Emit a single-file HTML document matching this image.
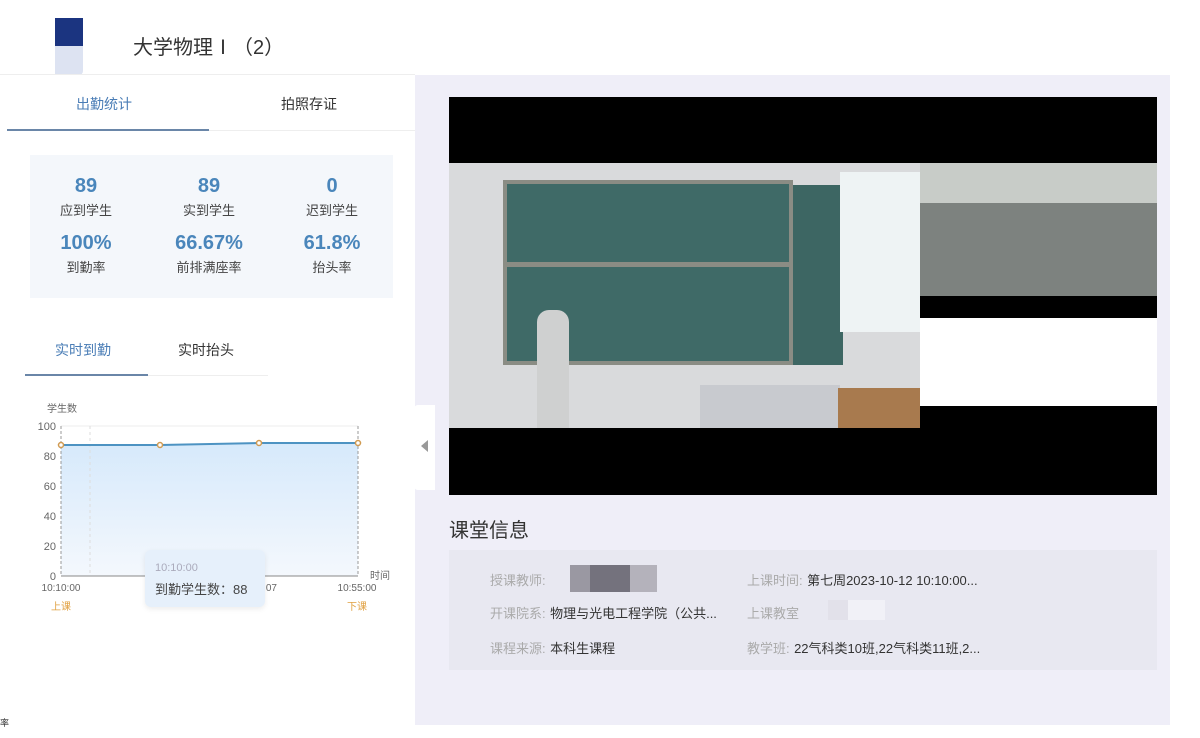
<!DOCTYPE html>
<html><head><meta charset="utf-8"><style>
*{margin:0;padding:0;box-sizing:border-box}
body{width:1200px;height:738px;background:#fff;position:relative;overflow:hidden;font-family:"Liberation Sans","Noto Sans CJK SC",sans-serif;color:#333}
.a{position:absolute}
.stat{position:absolute;width:120px;text-align:center}
.num{font-size:20px;font-weight:bold;color:#4a86bb}
.lb{font-size:13px;color:#444;margin-top:2px}
.lab{color:#aaa;font-size:13px}
.val{color:#333;font-size:13px}
</style></head><body>
<div class="a" style="left:55px;top:18px;width:28px;height:28px;background:#1b3480"></div>
<div class="a" style="left:55px;top:46px;width:28px;height:29px;background:#dde3f2;border-radius:0 0 4px 0"></div>
<div class="a" style="left:133px;top:31px;font-size:20px;color:#333">大学物理Ⅰ（2）</div>
<div class="a" style="left:0;top:74px;width:415px;height:1px;background:#eee"></div>
<div class="a" style="left:76px;top:94px;font-size:14px;color:#4a7db6">出勤统计</div>
<div class="a" style="left:281px;top:94px;font-size:14px;color:#333">拍照存证</div>
<div class="a" style="left:7px;top:130px;width:408px;height:1px;background:#eee"></div>
<div class="a" style="left:7px;top:129px;width:202px;height:2px;background:#6a86a8"></div>
<div class="a" style="left:30px;top:155px;width:363px;height:143px;background:#f4f7fb"></div>
<div class="stat" style="left:26px;top:175px"><div class="num">89</div><div class="lb">应到学生</div></div>
<div class="stat" style="left:149px;top:175px"><div class="num">89</div><div class="lb">实到学生</div></div>
<div class="stat" style="left:272px;top:175px"><div class="num">0</div><div class="lb">迟到学生</div></div>
<div class="stat" style="left:26px;top:232px"><div class="num">100%</div><div class="lb">到勤率</div></div>
<div class="stat" style="left:149px;top:232px"><div class="num">66.67%</div><div class="lb">前排满座率</div></div>
<div class="stat" style="left:272px;top:232px"><div class="num">61.8%</div><div class="lb">抬头率</div></div>
<div class="a" style="left:55px;top:340px;font-size:14px;color:#4a7db6">实时到勤</div>
<div class="a" style="left:178px;top:340px;font-size:14px;color:#333">实时抬头</div>
<div class="a" style="left:25px;top:375px;width:243px;height:1px;background:#eee"></div>
<div class="a" style="left:25px;top:374px;width:123px;height:2px;background:#6a86a8"></div>
<svg class="a" style="left:0;top:395px" width="415" height="230">
<defs><linearGradient id="g" x1="0" y1="0" x2="0" y2="1"><stop offset="0" stop-color="#d6e9fb"/><stop offset="1" stop-color="#f4f8fd"/></linearGradient></defs>
<text x="47" y="17" font-size="10" fill="#666">学生数</text>
<g font-size="11" fill="#666" text-anchor="end">
<text x="56" y="35">100</text><text x="56" y="65">80</text><text x="56" y="95">60</text><text x="56" y="125">40</text><text x="56" y="155">20</text><text x="56" y="185">0</text></g>
<g stroke="#eee"><line x1="61" y1="31" x2="358" y2="31"/><line x1="61" y1="61" x2="358" y2="61"/><line x1="61" y1="91" x2="358" y2="91"/><line x1="61" y1="121" x2="358" y2="121"/><line x1="61" y1="151" x2="358" y2="151"/></g>
<path d="M61 50 L160 50 L259 48 L358 48 L358 181 L61 181Z" fill="url(#g)"/>
<line x1="90" y1="31" x2="90" y2="181" stroke="#ddd" stroke-dasharray="3,3"/>
<line x1="61" y1="31" x2="61" y2="181" stroke="#999" stroke-dasharray="3,2"/>
<line x1="358" y1="31" x2="358" y2="181" stroke="#999" stroke-dasharray="3,2"/>
<line x1="61" y1="181" x2="358" y2="181" stroke="#888"/>
<path d="M61 50 L160 50 L259 48 L358 48" stroke="#4d93c2" stroke-width="2" fill="none"/>
<g fill="#fff" stroke="#d09a50" stroke-width="1.5"><circle cx="61" cy="50" r="2.5"/><circle cx="160" cy="50" r="2.5"/><circle cx="259" cy="48" r="2.5"/><circle cx="358" cy="48" r="2.5"/></g>
<text x="370" y="184" font-size="10" fill="#666">时间</text>
<g font-size="10" fill="#666" text-anchor="middle"><text x="61" y="196">10:10:00</text><text x="357" y="196">10:55:00</text><text x="270" y="196">:07</text></g>
<text x="61" y="215" font-size="10" fill="#e0a040" text-anchor="middle">上课</text>
<text x="357" y="215" font-size="10" fill="#e0a040" text-anchor="middle">下课</text>
</svg>
<div class="a" style="left:145px;top:550px;width:120px;height:57px;background:#e6f0fb;border-radius:6px;box-shadow:0 2px 6px rgba(0,0,0,.08)"></div>
<div class="a" style="left:155px;top:562px;font-size:11px;color:#aab">10:10:00</div>
<div class="a" style="left:155px;top:579px;font-size:13px;color:#444">到勤学生数：88</div>
<div class="a" style="left:0;top:716px;font-size:9px;color:#333">率</div>
<div class="a" style="left:415px;top:75px;width:755px;height:650px;background:#efeef8"></div>
<div class="a" style="left:414px;top:405px;width:21px;height:85px;background:#fff;border-radius:4px 0 0 4px"></div>
<div class="a" style="left:421px;top:440px;width:0;height:0;border-top:6px solid transparent;border-bottom:6px solid transparent;border-right:7px solid #999"></div>
<div class="a" style="left:449px;top:97px;width:708px;height:398px;background:#000"></div>
<div class="a" style="left:449px;top:163px;width:471px;height:265px;background:#d9dadc"></div>
<div class="a" style="left:503px;top:180px;width:290px;height:185px;background:#3f6a67;border:4px solid #8a8c84"></div>
<div class="a" style="left:503px;top:262px;width:290px;height:5px;background:#8a8c84"></div>
<div class="a" style="left:793px;top:185px;width:50px;height:180px;background:#3d6663"></div>
<div class="a" style="left:840px;top:172px;width:80px;height:160px;background:#eef3f4"></div>
<div class="a" style="left:700px;top:385px;width:140px;height:43px;background:#c8cacf"></div>
<div class="a" style="left:838px;top:388px;width:82px;height:40px;background:#a87a4e"></div>
<div class="a" style="left:537px;top:310px;width:32px;height:118px;background:#cfd0d0;border-radius:12px 12px 0 0"></div>
<div class="a" style="left:920px;top:163px;width:237px;height:133px;background:#7d827f"></div>
<div class="a" style="left:920px;top:163px;width:237px;height:40px;background:#c8ccc8"></div>
<div class="a" style="left:920px;top:318px;width:237px;height:88px;background:#fff"></div>
<div class="a" style="left:449px;top:514px;font-size:20px;color:#333">课堂信息</div>
<div class="a" style="left:449px;top:550px;width:708px;height:120px;background:#e8e8f1"></div>
<div class="a" style="left:490px;top:570px" ><span class="lab">授课教师:</span></div>
<div class="a" style="left:570px;top:565px;width:20px;height:27px;background:#9a98a2"></div>
<div class="a" style="left:590px;top:565px;width:40px;height:27px;background:#74727d"></div>
<div class="a" style="left:630px;top:565px;width:27px;height:27px;background:#b4b2bb"></div>
<div class="a" style="left:747px;top:570px"><span class="lab">上课时间:</span> <span class="val">第七周2023-10-12 10:10:00...</span></div>
<div class="a" style="left:490px;top:603px"><span class="lab">开课院系:</span> <span class="val">物理与光电工程学院（公共...</span></div>
<div class="a" style="left:747px;top:603px"><span class="lab">上课教室</span></div>
<div class="a" style="left:828px;top:600px;width:20px;height:20px;background:#e2e1ea"></div>
<div class="a" style="left:848px;top:600px;width:37px;height:20px;background:#f1f1f7"></div>
<div class="a" style="left:490px;top:638px"><span class="lab">课程来源:</span> <span class="val">本科生课程</span></div>
<div class="a" style="left:747px;top:638px"><span class="lab">教学班:</span> <span class="val">22气科类10班,22气科类11班,2...</span></div>
</body></html>
